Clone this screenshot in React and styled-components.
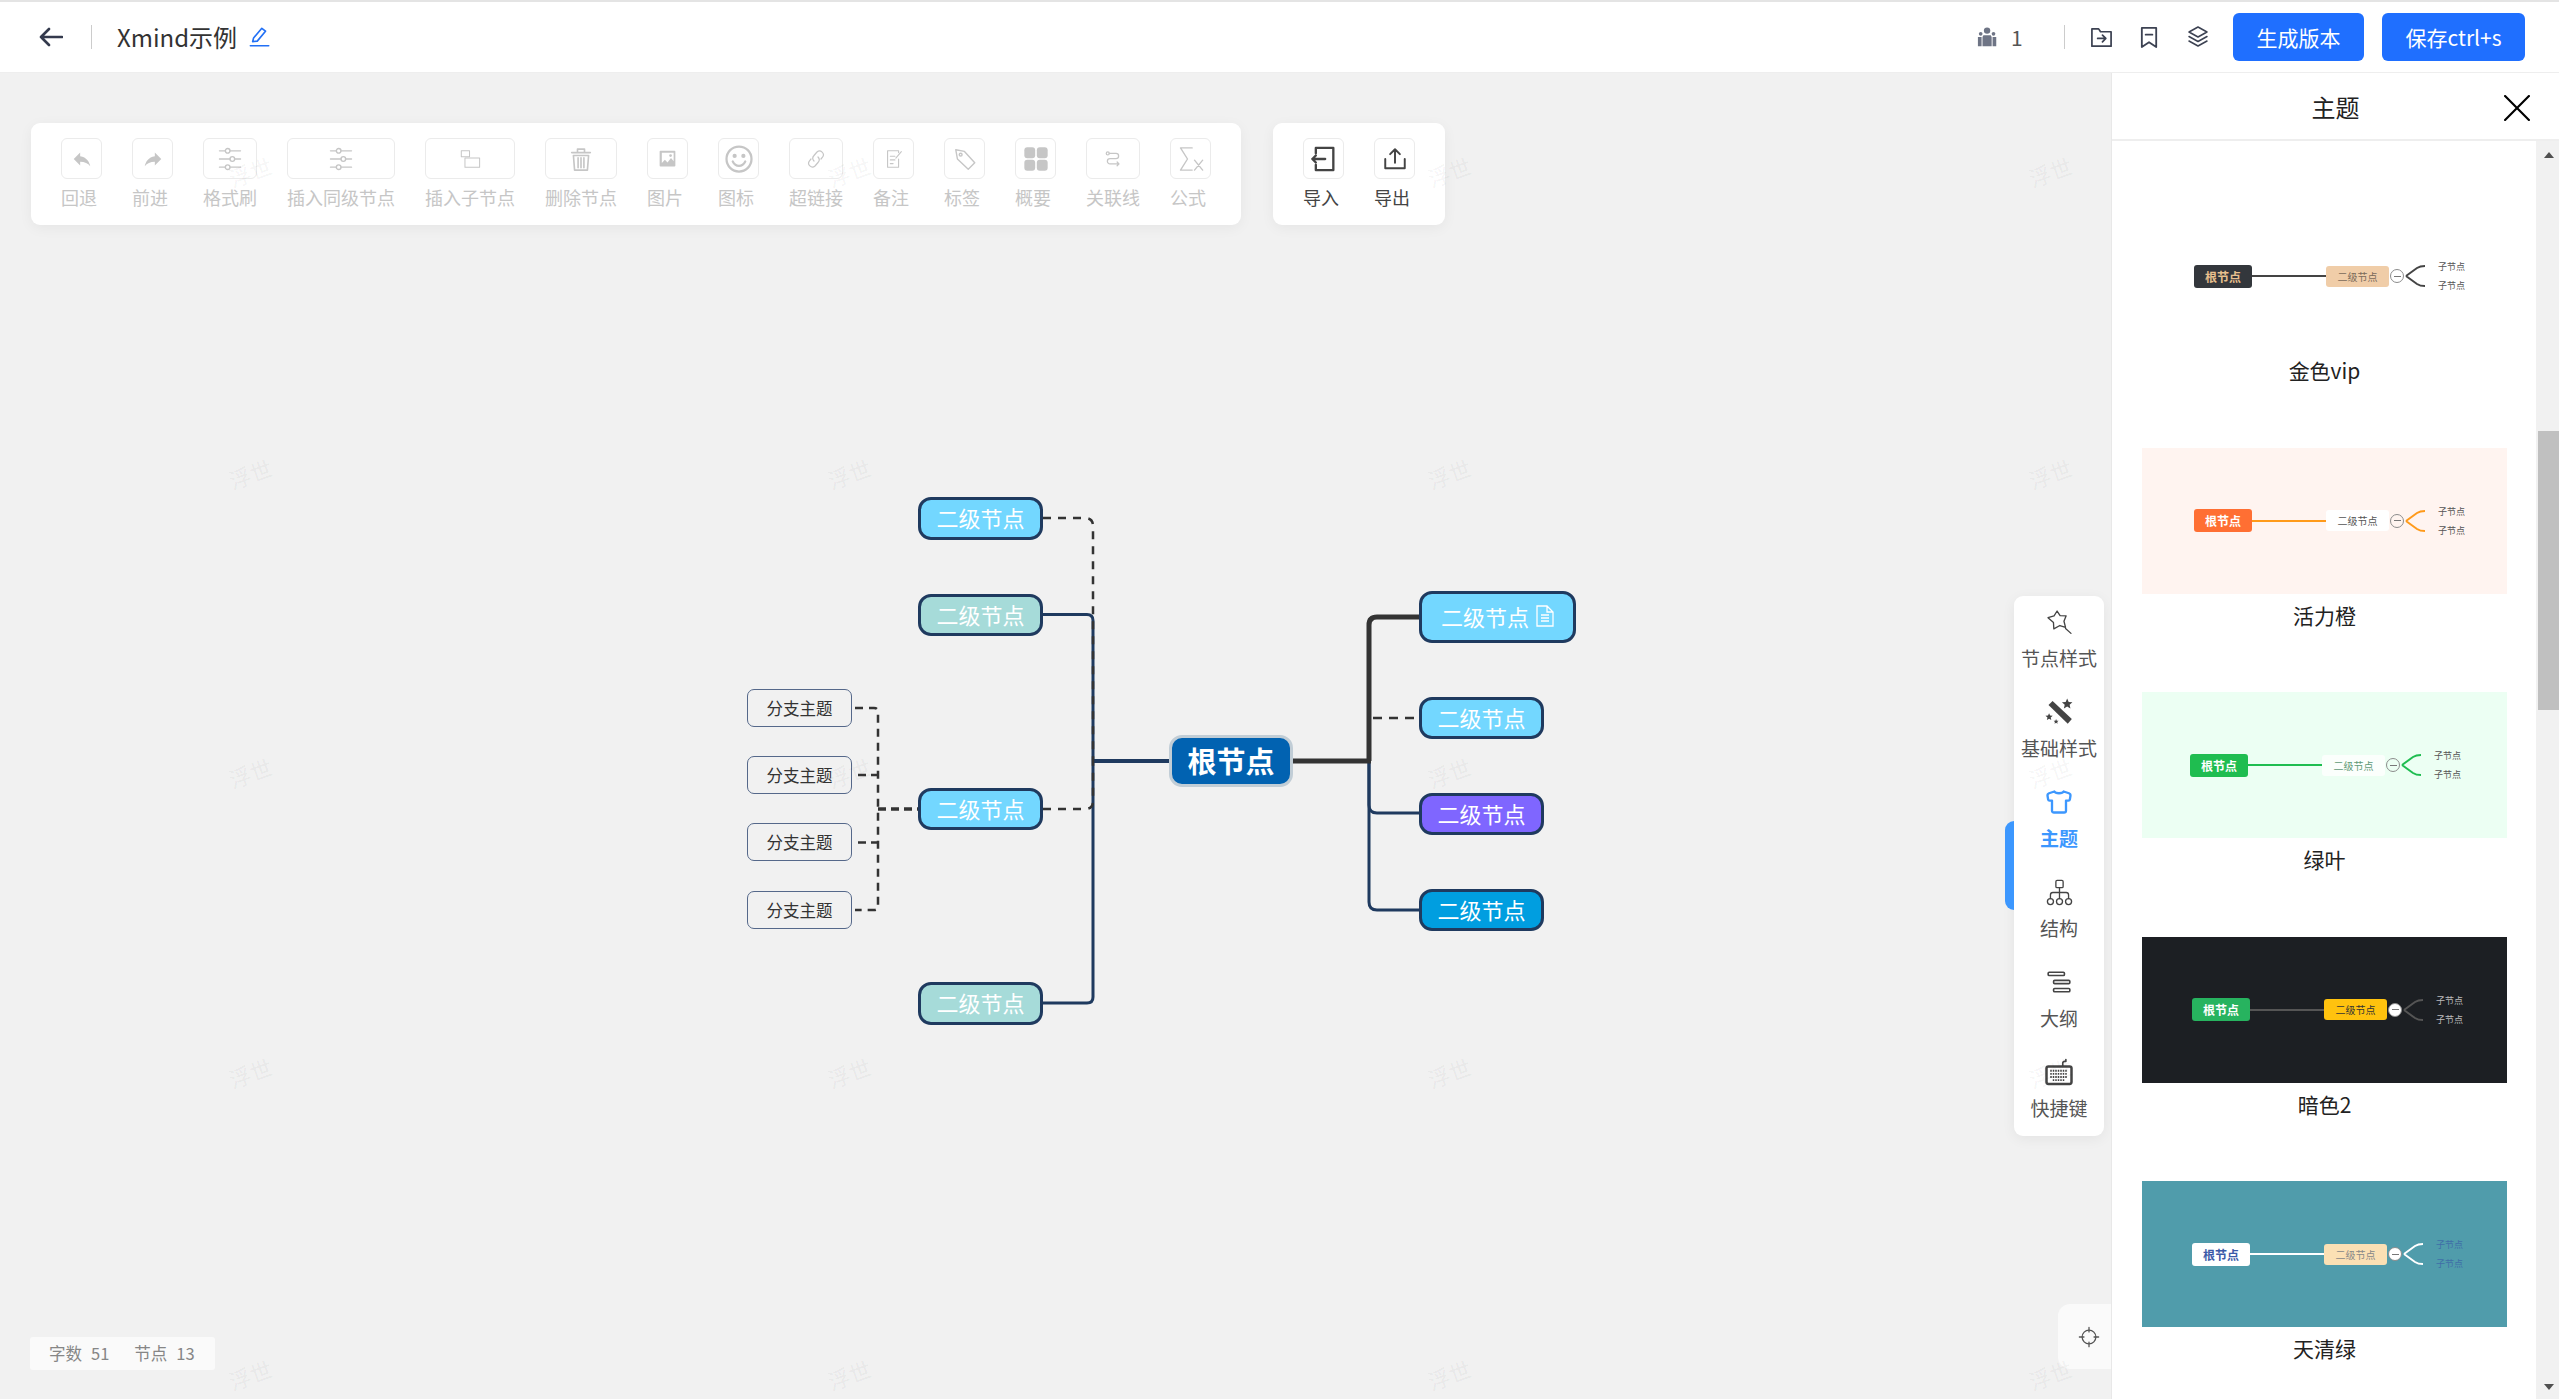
import React from "react";
import styled, { createGlobalStyle } from "styled-components";

const FONT = '"Noto Sans CJK SC", "Noto Sans", sans-serif';
const HEADER_H = 73;

const GlobalStyle = createGlobalStyle`
  html, body { margin: 0; padding: 0; height: 100%; }
  body { font-family: ${FONT}; background: #f0f0f0; overflow: hidden; }
  * { box-sizing: border-box; }
`;

const Page = styled.div`
  width: 100%;
  height: 100vh;
  display: flex;
  flex-direction: column;
  overflow: hidden;
`;

/* header */
const Header = styled.header`
  height: ${HEADER_H}px;
  flex: none;
  display: flex;
  align-items: center;
  background: #fff;
  border-top: 2px solid #e4e4e4;
  border-bottom: 1px solid #eee;
  padding: 0 34px 0 39px;
`;
const BackBtn = styled.span`
  display: flex;
  width: 24px;
  color: #343a4d;
`;
const Divider = styled.span`
  width: 1px;
  height: 24px;
  background: #ccc;
  margin: ${({ $m }) => $m};
`;
const Title = styled.span`
  font-size: 24px;
  line-height: 32px;
  color: #333;
`;
const EditIcon = styled.span`
  display: flex;
  margin-left: 12px;
  color: #2270f5;
`;
const HeaderRight = styled.div`
  margin-left: auto;
  display: flex;
  align-items: center;
`;
const Count = styled.span`
  font-size: 21px;
  color: #555;
  margin-left: 12px;
  width: 10px;
`;
const HeadIcon = styled.span`
  display: flex;
  margin-left: ${({ $ml }) => $ml}px;
  color: ${({ $c }) => $c || "#3c4252"};
`;
const PrimaryBtn = styled.button`
  height: 48px;
  width: ${({ $w }) => $w}px;
  margin-left: ${({ $ml }) => $ml}px;
  border: 0;
  border-radius: 6px;
  background: #1f6fff;
  color: #fff;
  font-family: ${FONT};
  font-size: 21px;
  padding: 0;
`;

/* main */
const Main = styled.main`
  flex: 1;
  display: flex;
  min-height: 0;
`;
const Canvas = styled.section`
  flex: 1;
  position: relative;
  background: #f1f1f1;
  overflow: hidden;
`;

const Toolbars = styled.div`
  position: absolute;
  left: 31px;
  top: 50px;
  display: flex;
  gap: 32px;
`;
const Toolbar = styled.div`
  display: flex;
  gap: 30px;
  padding: 15px 30px 14px;
  background: #fff;
  border-radius: 9px;
  box-shadow: 0 3px 14px rgba(0, 0, 0, 0.05);
`;
const ToolItem = styled.div`
  display: flex;
  flex-direction: column;
  min-width: 41px;
  color: ${({ $off }) => ($off ? "#c6c6c6" : "#444")};
`;
const ToolBox = styled.div`
  height: 41px;
  display: flex;
  align-items: center;
  justify-content: center;
  border: 1px solid #ebebeb;
  border-radius: 6px;
  background: #fff;
`;
const ToolLabel = styled.div`
  margin-top: 5px;
  font-size: 18px;
  line-height: 27px;
  white-space: nowrap;
`;

/* mind map, nodes sit on a free canvas */
const Wires = styled.svg`
  position: absolute;
  left: 0;
  top: -${HEADER_H}px;
  width: 2111px;
  height: 1399px;
`;
const placed = (p) => ({
  style: { left: p.$x, top: p.$y - HEADER_H, width: p.$w, height: p.$h },
});
const MapNode = styled.div.attrs(placed)`
  position: absolute;
  display: flex;
  align-items: center;
  justify-content: center;
  gap: 7px;
  padding-bottom: 3px;
  border: 3px solid #1f3a5f;
  border-radius: 13px;
  background: ${({ $bg }) => $bg};
  color: #fff;
  font-size: 22px;
  white-space: nowrap;
`;
const RootNode = styled.div.attrs(placed)`
  position: absolute;
  display: flex;
  align-items: center;
  justify-content: center;
  padding-bottom: 2px;
  border: 3px solid #c1cdd6;
  border-radius: 13px;
  background: #0162b1;
  color: #fff;
  font-size: 29px;
  font-weight: 700;
`;
const SubNode = styled.div.attrs(placed)`
  position: absolute;
  display: flex;
  align-items: center;
  justify-content: center;
  border: 1.5px solid #55688a;
  border-radius: 7px;
  color: #333;
  font-size: 16.5px;
`;

const StatusBar = styled.div`
  position: absolute;
  left: 30px;
  bottom: 29px;
  width: 185px;
  height: 33px;
  display: flex;
  align-items: center;
  padding: 0 0 2px 19px;
  gap: 25px;
  background: #fafafa;
  border-radius: 3px;
  color: #868686;
  font-size: 16.5px;
`;
const Stat = styled.span`
  display: flex;
  gap: 9px;
`;

const Rail = styled.nav`
  position: absolute;
  left: 2014px;
  top: 523px;
  width: 90px;
  background: #fff;
  border-radius: 9px;
  box-shadow: 0 3px 14px rgba(0, 0, 0, 0.06);
`;
const RailTab = styled.span`
  position: absolute;
  left: -9px;
  top: 225px;
  width: 9px;
  height: 89px;
  background: #3c97fe;
  border-radius: 13px 0 0 13px;
`;
const RailItem = styled.div`
  height: 90px;
  display: flex;
  flex-direction: column;
  align-items: center;
  padding-top: 13px;
  color: ${({ $on }) => ($on ? "#3c97fe" : "#555")};
  font-weight: ${({ $on }) => ($on ? 700 : 400)};
`;
const RailIcon = styled.span`
  height: 26px;
  display: flex;
  align-items: center;
  justify-content: center;
  color: ${({ $on }) => ($on ? "#3c97fe" : "#444")};
`;
const RailLabel = styled.span`
  margin-top: 9px;
  font-size: 19px;
  line-height: 28px;
  white-space: nowrap;
`;

const LocateBtn = styled.div`
  position: absolute;
  right: 0;
  bottom: 30px;
  width: 53px;
  height: 65px;
  display: flex;
  align-items: center;
  justify-content: center;
  padding-left: 9px;
  background: #fafafa;
  border-radius: 12px 0 0 12px;
  color: #555;
`;

const Mark = styled.span.attrs((p) => ({
  style: { left: p.$x - 22, top: p.$y - HEADER_H - 16 },
}))`
  position: absolute;
  font-size: 22px;
  line-height: 32px;
  color: rgba(0, 0, 0, 0.055);
  transform: rotate(-20deg);
  pointer-events: none;
`;

/* theme panel */
const Panel = styled.aside`
  width: 448px;
  flex: none;
  display: flex;
  flex-direction: column;
  background: #fff;
  border-left: 1px solid #e8e8e8;
`;
const PanelHead = styled.div`
  position: relative;
  height: 68px;
  flex: none;
  display: flex;
  align-items: center;
  justify-content: center;
  border-bottom: 2px solid #eee;
  font-size: 24px;
  color: #222;
`;
const CloseBtn = styled.span`
  position: absolute;
  right: 29px;
  top: 22px;
  display: flex;
  color: #000;
`;
const PanelBody = styled.div`
  flex: 1;
  display: flex;
  min-height: 0;
`;
const ThemeList = styled.div`
  flex: 1;
  overflow: hidden;
  padding: 62px 0 0 30px;
`;
const ThemeItem = styled.div`
  height: 244.5px;
  width: 365px;
`;
const ThemePic = styled.div`
  height: 146px;
  display: flex;
  align-items: center;
  padding-left: ${({ $pl }) => $pl}px;
  background: ${({ $c }) => $c.bg};
`;
const ThemeName = styled.div`
  margin-top: 6px;
  font-size: 21px;
  line-height: 30px;
  text-align: center;
  color: #222;
`;
const ThumbRoot = styled.span`
  width: 58px;
  height: 23px;
  display: flex;
  align-items: center;
  justify-content: center;
  border-radius: 3px;
  background: ${({ $c }) => $c.root};
  color: ${({ $c }) => $c.rootText};
  font-size: 12px;
  font-weight: 700;
`;
const ThumbLine = styled.span`
  width: 74px;
  height: 2px;
  background: ${({ $c }) => $c.line};
`;
const ThumbSecond = styled.span`
  width: 63px;
  height: 21px;
  display: flex;
  align-items: center;
  justify-content: center;
  border-radius: 3px;
  background: ${({ $c }) => $c.second};
  color: ${({ $c }) => $c.secondText};
  font-size: 10px;
`;
const ThumbCircle = styled.span`
  width: 14px;
  height: 14px;
  margin: 0 1px;
  display: flex;
  align-items: center;
  justify-content: center;
  border: 1.5px solid #8c8c8c;
  border-radius: 50%;
  background: ${({ $c }) => $c.circle};
  &::after {
    content: "";
    width: 7px;
    height: 1px;
    background: #777;
  }
`;
const ThumbBranch = styled.svg`
  width: 21px;
  height: 22px;
  color: ${({ $c }) => $c.branch};
`;
const ThumbKids = styled.span`
  margin-left: 12px;
  display: flex;
  flex-direction: column;
  font-size: 9px;
  line-height: 19px;
  color: ${({ $c }) => $c.kid};
`;

const ScrollTrack = styled.div`
  width: 23px;
  flex: none;
  display: flex;
  flex-direction: column;
  align-items: flex-end;
  background: #f1f1f1;
`;
const ScrollThumb = styled.div`
  width: 21px;
  height: 279px;
  margin-top: 273px;
  background: #c0c0c0;
`;
const ArrowUp = styled.span`
  width: 0;
  height: 0;
  margin: 11px 5px 0 0;
  border: 5.5px solid transparent;
  border-top: 0;
  border-bottom: 6px solid #505050;
`;
const ArrowDown = styled.span`
  width: 0;
  height: 0;
  margin: auto 5px 9px 0;
  border: 5.5px solid transparent;
  border-bottom: 0;
  border-top: 6px solid #505050;
`;

/* icons */
const Svg = ({ size = 24, vb = "0 0 24 24", sw = 1.6, children }) => (
  <svg
    width={size}
    height={size}
    viewBox={vb}
    fill="none"
    stroke="currentColor"
    strokeWidth={sw}
    strokeLinecap="round"
    strokeLinejoin="round"
  >
    {children}
  </svg>
);

const Sliders = () => (
  <Svg size={28} sw={1.2}>
    <path d="M3 5h5M12 5h9M3 12h9M16 12h5M3 19h5M12 19h9" />
    <circle cx="10" cy="5" r="2" />
    <circle cx="14" cy="12" r="2" />
    <circle cx="10" cy="19" r="2" />
  </Svg>
);

const toolIcons = {
  undo: (
    <Svg size={22} sw={0}>
      <path fill="currentColor" d="M10 9V5l-7 7 7 7v-4.1c5 0 8.5 1.6 11 5.1-1-5-4-10-11-11z" />
    </Svg>
  ),
  redo: (
    <Svg size={22} sw={0}>
      <path fill="currentColor" d="M14 9V5l7 7-7 7v-4.1c-5 0-8.5 1.6-11 5.1 1-5 4-10 11-11z" />
    </Svg>
  ),
  sliders: <Sliders />,
  child: (
    <Svg size={22} sw={1.1}>
      <rect x="2.5" y="3" width="9" height="6.5" />
      <rect x="6.5" y="11" width="16" height="10" />
    </Svg>
  ),
  trash: (
    <Svg size={28} sw={1.4}>
      <path d="M4 6.5h16M9 6.5V3.5h6v3M5.5 9h13l-1 12.5h-11zM9.5 11v8.5M12 11v8.5M14.5 11v8.5" />
    </Svg>
  ),
  image: (
    <Svg size={21} sw={0}>
      <path
        fill="currentColor"
        fillRule="evenodd"
        d="M4 3h16a1 1 0 0 1 1 1v16a1 1 0 0 1-1 1H4a1 1 0 0 1-1-1V4a1 1 0 0 1 1-1zm1.5 11.5V17l3.5-3.500 3 3 4-5 3 3.500V5.500H5.500zM15.500 7a1.600 1.600 0 1 1 0 3.200 1.600 1.600 0 0 1 0-3.200z"
      />
    </Svg>
  ),
  smile: (
    <Svg size={30} sw={1.8}>
      <circle cx="12" cy="12" r="10" />
      <circle cx="8.5" cy="9.5" r="0.8" fill="currentColor" />
      <circle cx="15.5" cy="9.5" r="0.8" fill="currentColor" />
      <path d="M7 14c1.2 2.4 3 3.500 5 3.500s3.800-1.100 5-3.500" />
    </Svg>
  ),
  link: (
    <Svg size={24} sw={1.2}>
      <path d="M10 14a4 4 0 0 1 0-5.500l3-3.500a3.800 3.800 0 0 1 5.500 5.200l-1.500 1.800" />
      <path d="M14 10a4 4 0 0 1 0 5.500l-3 3.500a3.800 3.800 0 0 1-5.500-5.200l1.500-1.800" />
    </Svg>
  ),
  note: (
    <Svg size={22} sw={1.2}>
      <path d="M17 5V3H5v18h12v-9M8 9h5M8 13h5M8 17h3M14 11l6-7" />
    </Svg>
  ),
  tag: (
    <Svg size={26} sw={1.3}>
      <path d="M3.500 3.500l8 1.500 9.500 10.500-6 6L5 12z" />
      <circle cx="8" cy="8" r="1.300" />
    </Svg>
  ),
  grid: (
    <Svg size={28} sw={0}>
      <g fill="currentColor">
        <rect x="2" y="2" width="9.300" height="9.300" rx="2.500" />
        <rect x="12.700" y="2" width="9.300" height="9.300" rx="2.500" />
        <rect x="2" y="12.700" width="9.300" height="9.300" rx="2.500" />
        <rect x="12.700" y="12.700" width="9.300" height="9.300" rx="2.500" />
      </g>
    </Svg>
  ),
  relate: (
    <Svg size={18} sw={1.7}>
      <circle cx="5" cy="4.500" r="2" />
      <path d="M7 4.500h9a3.500 3.500 0 0 1 0 7H8a3.500 3.500 0 0 0 0 7h12M17.500 16l2.500 2.500-2.500 2.500" />
    </Svg>
  ),
  formula: (
    <Svg size={28} sw={1.2}>
      <path d="M13 2.500H3l6 9.500-6 9.500h10M15 13l7 8.500M22 13l-7 8.500" />
    </Svg>
  ),
  import: (
    <Svg size={28} sw={2}>
      <path d="M5 7V2.500h15v19H5V17M2 12h11M2 12l3-3M2 12l3 3" />
    </Svg>
  ),
  export: (
    <Svg size={26} sw={1.8}>
      <path d="M3 12v8.500h18V12M12 15.500V3M7.500 7.500L12 3l4.500 4.500" />
    </Svg>
  ),
};

const railIcons = {
  star: (
    <Svg size={29} sw={1.1}>
      <path d="M10 2.500l2.500 3.800 5 .2-1.800 4.500 1.300 5-4.700-1.500-5 2.800-.3-5.300L2.500 8l5-1.500zM17 17l4.500 4" />
    </Svg>
  ),
  wand: (
    <Svg size={28} sw={0}>
      <g fill="currentColor">
        <path d="M3 6l3.500-3.500L23 18l-3.500 4z" />
        <path d="M19 .500l1.300 2.900 3.200.3-2.400 2.100.7 3.100-2.800-1.600-2.800 1.600.7-3.100-2.400-2.100 3.200-.3z" />
        <path d="M3.500 13l.9 2 2.200.2-1.700 1.500.5 2.200-1.900-1.100-1.900 1.100.5-2.200L.4 15.200l2.200-.2z" />
        <path d="M9.500 18l.6 1.400 1.500.1-1.100 1 .3 1.500-1.300-.8-1.300.8.300-1.500-1.100-1 1.500-.1z" />
      </g>
    </Svg>
  ),
  shirt: (
    <Svg size={28} sw={2}>
      <path d="M8 3c1 2 7 2 8 0l4.500 1.500c1 .4 1.500 1.300 1.300 2.300l-.5 3c-.1.600-.6 1-1.200 1H18v8.700c0 1-.8 1.500-1.700 1.500H7.700c-.9 0-1.700-.5-1.700-1.500v-8.700H3.900c-.6 0-1.100-.4-1.200-1l-.5-3c-.2-1 .3-1.900 1.300-2.300z" />
    </Svg>
  ),
  tree: (
    <Svg size={29} sw={1.1}>
      <rect x="9" y="2" width="6" height="6" rx="1" />
      <path d="M12 8v4M4.500 17v-3a2 2 0 0 1 2-2h11a2 2 0 0 1 2 2v3M12 12v5" />
      <circle cx="4.500" cy="19.500" r="2.500" />
      <circle cx="12" cy="19.500" r="2.500" />
      <circle cx="19.500" cy="19.500" r="2.500" />
    </Svg>
  ),
  outline: (
    <Svg size={26} sw={1.5}>
      <rect x="2" y="3" width="15" height="3" rx="1" />
      <rect x="7" y="10.500" width="15" height="3" rx="1" />
      <rect x="7" y="18" width="15" height="3" rx="1" />
    </Svg>
  ),
  keys: (
    <Svg size={30} sw={2}>
      <rect x="2" y="7.500" width="20" height="14" rx="1.500" />
      <path d="M15 7.500V5c0-1 .6-1.500 1.500-1.500h1V2" strokeWidth="1.300" />
      <path d="M5 11h14M5 13.500h14M5 16h14M7 18.500h10" strokeWidth="1.500" strokeDasharray="1.200 .8" strokeLinecap="butt" />
    </Svg>
  ),
};

const tools = [
  { label: "回退", icon: "undo" },
  { label: "前进", icon: "redo" },
  { label: "格式刷", icon: "sliders" },
  { label: "插入同级节点", icon: "sliders" },
  { label: "插入子节点", icon: "child" },
  { label: "删除节点", icon: "trash" },
  { label: "图片", icon: "image" },
  { label: "图标", icon: "smile" },
  { label: "超链接", icon: "link" },
  { label: "备注", icon: "note" },
  { label: "标签", icon: "tag" },
  { label: "概要", icon: "grid" },
  { label: "关联线", icon: "relate" },
  { label: "公式", icon: "formula" },
];

const railItems = [
  { label: "节点样式", icon: "star" },
  { label: "基础样式", icon: "wand" },
  { label: "主题", icon: "shirt", on: true },
  { label: "结构", icon: "tree" },
  { label: "大纲", icon: "outline" },
  { label: "快捷键", icon: "keys" },
];

const CYAN = "#73d7ff";
const TEAL = "#a6dbd9";
const secondNodes = [
  { x: 918, y: 497, w: 125, h: 43, bg: CYAN },
  { x: 918, y: 594, w: 125, h: 42, bg: TEAL },
  { x: 918, y: 788, w: 125, h: 42, bg: CYAN },
  { x: 918, y: 982, w: 125, h: 43, bg: TEAL },
  { x: 1419, y: 697, w: 125, h: 42, bg: CYAN },
  { x: 1419, y: 793, w: 125, h: 42, bg: "#7f66ff" },
  { x: 1419, y: 889, w: 125, h: 42, bg: "#009ee0" },
];
const subNodes = [689, 756, 823, 891];

const NAVY = "#1f3a5f";
const DARK = "#333";
const wires = [
  { d: "M1043 614.500H1087q6 0 6 6V761", c: NAVY, w: 3 },
  { d: "M1043 1003H1087q6 0 6-6V761", c: NAVY, w: 3 },
  { d: "M1093 761H1169", c: NAVY, w: 4 },
  { d: "M1043 518H1085q8 0 8 8V761", c: DARK, w: 2.500, dash: "8 7" },
  { d: "M1043 809H1085q8 0 8-8V761", c: DARK, w: 2.500, dash: "8 7" },
  { d: "M878 809H918", c: DARK, w: 3.500, dash: "8 5" },
  { d: "M855 708H874q4 0 4 4V906q0 4-4 4H855", c: DARK, w: 2.500, dash: "8 6" },
  { d: "M858 775H878", c: DARK, w: 2.500, dash: "8 5" },
  { d: "M858 842.500H878", c: DARK, w: 2.500, dash: "8 5" },
  { d: "M1369 761V805q0 8 8 8H1419", c: NAVY, w: 3 },
  { d: "M1369 761V902q0 8 8 8H1419", c: NAVY, w: 3 },
  { d: "M1293 761H1371M1369 761V625q0-8 8-8H1419", c: DARK, w: 5 },
  { d: "M1373 718H1416", c: DARK, w: 2.500, dash: "9 7" },
];

const marks = [];
[250, 849, 1449, 2050].forEach((x) =>
  [171, 473, 772, 1072, 1374].forEach((y) => marks.push({ x, y }))
);

const themes = [
  {
    name: "金色vip",
    pl: 52,
    c: { bg: "#fff", root: "#33373c", rootText: "#e8c08e", line: "#444", second: "#f0cda8", secondText: "#7a6a5a", circle: "#fff", branch: "#444", kid: "#555" },
  },
  {
    name: "活力橙",
    pl: 52,
    c: { bg: "#fff4f0", root: "#ff6f33", rootText: "#fff", line: "#ff9a1a", second: "#fff", secondText: "#555", circle: "#fff4f0", branch: "#ff9a1a", kid: "#555" },
  },
  {
    name: "绿叶",
    pl: 48,
    c: { bg: "#ecfff3", root: "#1fbd50", rootText: "#fff", line: "#1fbd50", second: "#fbfffc", secondText: "#5f9a76", circle: "#ecfff3", branch: "#1fbd50", kid: "#555" },
  },
  {
    name: "暗色2",
    pl: 50,
    c: { bg: "#1c1f23", root: "#27b35f", rootText: "#fff", line: "#555", second: "#ffc20e", secondText: "#333", circle: "#fff", branch: "#555", kid: "#bbb" },
  },
  {
    name: "天清绿",
    pl: 50,
    c: { bg: "#509cab", root: "#fff", rootText: "#3c5aa8", line: "#fff", second: "#fbe0b4", secondText: "#888", circle: "#fff", branch: "#fff", kid: "#3f6ea8" },
  },
];

const ToolButton = ({ label, icon, off }) => (
  <ToolItem $off={off}>
    <ToolBox>{toolIcons[icon]}</ToolBox>
    <ToolLabel>{label}</ToolLabel>
  </ToolItem>
);

const ThemeCard = ({ name, pl, c }) => (
  <ThemeItem>
    <ThemePic $c={c} $pl={pl}>
      <ThumbRoot $c={c}>根节点</ThumbRoot>
      <ThumbLine $c={c} />
      <ThumbSecond $c={c}>二级节点</ThumbSecond>
      <ThumbCircle $c={c} />
      <ThumbBranch $c={c} viewBox="0 0 21 22" fill="none" stroke="currentColor" strokeWidth="2">
        <path d="M1 11L12 3q3-2 8-2M1 11l11 8q3 2 8 2" />
      </ThumbBranch>
      <ThumbKids $c={c}>
        <span>子节点</span>
        <span>子节点</span>
      </ThumbKids>
    </ThemePic>
    <ThemeName>{name}</ThemeName>
  </ThemeItem>
);

const App = () => (
  <Page>
    <GlobalStyle />
    <Header>
      <BackBtn>
        <Svg size={24} sw={2.6}>
          <path d="M23 12H2M10 4l-8 8 8 8" />
        </Svg>
      </BackBtn>
      <Divider $m="0 25px 0 28px" />
      <Title>Xmind示例</Title>
      <EditIcon>
        <Svg size={22} sw={1.8}>
          <path d="M4 17l1-4L14 2.500l4 3.200L9 16.500zM1.500 21.500h20" />
        </Svg>
      </EditIcon>
      <HeaderRight>
        <HeadIcon $c="#6e7485" $ml={0}>
          <Svg size={22} sw={0}>
            <g fill="currentColor">
              <circle cx="11" cy="5" r="3.500" />
              <path d="M7 10h8l1 2v10H6V12z" />
              <circle cx="4" cy="8.500" r="2" />
              <circle cx="18" cy="8.500" r="2" />
              <path d="M1 12h4v10H1zM17 12h4v10h-4z" />
            </g>
          </Svg>
        </HeadIcon>
        <Count>1</Count>
        <Divider $m="0 0 0 43px" />
        <HeadIcon $ml={25}>
          <Svg size={23} sw={1.8}>
            <path d="M2 3h7l2 3h11v15H2zM8 13h8M13 9.500l3.500 3.500-3.500 3.500" />
          </Svg>
        </HeadIcon>
        <HeadIcon $ml={25}>
          <Svg size={23} sw={1.9}>
            <path d="M4 2h15v20l-7.500-5L4 22zM8 9h7" />
          </Svg>
        </HeadIcon>
        <HeadIcon $ml={25}>
          <Svg size={24} sw={1.500}>
            <path d="M12 2l9 5-9 5-9-5zM3 11.500l9 5 9-5M3 16l9 5 9-5" />
          </Svg>
        </HeadIcon>
        <PrimaryBtn $w={131} $ml={23}>生成版本</PrimaryBtn>
        <PrimaryBtn $w={143} $ml={18}>保存ctrl+s</PrimaryBtn>
      </HeaderRight>
    </Header>
    <Main>
      <Canvas>
        <Wires viewBox="0 0 2111 1399" fill="none" strokeLinejoin="round">
          {wires.map((w) => (
            <path key={w.d} d={w.d} stroke={w.c} strokeWidth={w.w} strokeDasharray={w.dash} />
          ))}
        </Wires>
        {secondNodes.map((n) => (
          <MapNode key={n.x + "-" + n.y} $x={n.x} $y={n.y} $w={n.w} $h={n.h} $bg={n.bg}>
            二级节点
          </MapNode>
        ))}
        <MapNode $x={1419} $y={591} $w={157} $h={52} $bg={CYAN}>
          二级节点
          <svg width="18" height="22" viewBox="0 0 18 22" fill="none" stroke="#fff" strokeWidth="1.300">
            <path d="M1 1h10l6 6v14H1zM11 1v6h6M5 10h8M5 13h8M5 16h8" />
          </svg>
        </MapNode>
        <RootNode $x={1169} $y={735} $w={124} $h={52}>根节点</RootNode>
        {subNodes.map((y) => (
          <SubNode key={y} $x={747} $y={y} $w={105} $h={38}>分支主题</SubNode>
        ))}

        <Toolbars>
          <Toolbar>
            {tools.map((t) => (
              <ToolButton key={t.label} label={t.label} icon={t.icon} off />
            ))}
          </Toolbar>
          <Toolbar>
            <ToolButton label="导入" icon="import" />
            <ToolButton label="导出" icon="export" />
          </Toolbar>
        </Toolbars>

        <StatusBar>
          <Stat><span>字数</span><span>51</span></Stat>
          <Stat><span>节点</span><span>13</span></Stat>
        </StatusBar>

        <Rail>
          <RailTab />
          {railItems.map((r) => (
            <RailItem key={r.label} $on={r.on}>
              <RailIcon $on={r.on}>{railIcons[r.icon]}</RailIcon>
              <RailLabel>{r.label}</RailLabel>
            </RailItem>
          ))}
        </Rail>

        <LocateBtn>
          <Svg size={22} sw={1.400}>
            <circle cx="12" cy="12" r="7.500" />
            <path d="M12 1.500v5M12 17.500v5M1.500 12h5M17.500 12h5" />
          </Svg>
        </LocateBtn>

        {marks.map((m) => (
          <Mark key={m.x + "-" + m.y} $x={m.x} $y={m.y}>浮世</Mark>
        ))}
      </Canvas>

      <Panel>
        <PanelHead>
          主题
          <CloseBtn>
            <Svg size={26} sw={2}>
              <path d="M1 1l22 22M23 1L1 23" />
            </Svg>
          </CloseBtn>
        </PanelHead>
        <PanelBody>
          <ThemeList>
            {themes.map((t) => (
              <ThemeCard key={t.name} {...t} />
            ))}
          </ThemeList>
          <ScrollTrack>
            <ArrowUp />
            <ScrollThumb />
            <ArrowDown />
          </ScrollTrack>
        </PanelBody>
      </Panel>
    </Main>
  </Page>
);

export default App;
